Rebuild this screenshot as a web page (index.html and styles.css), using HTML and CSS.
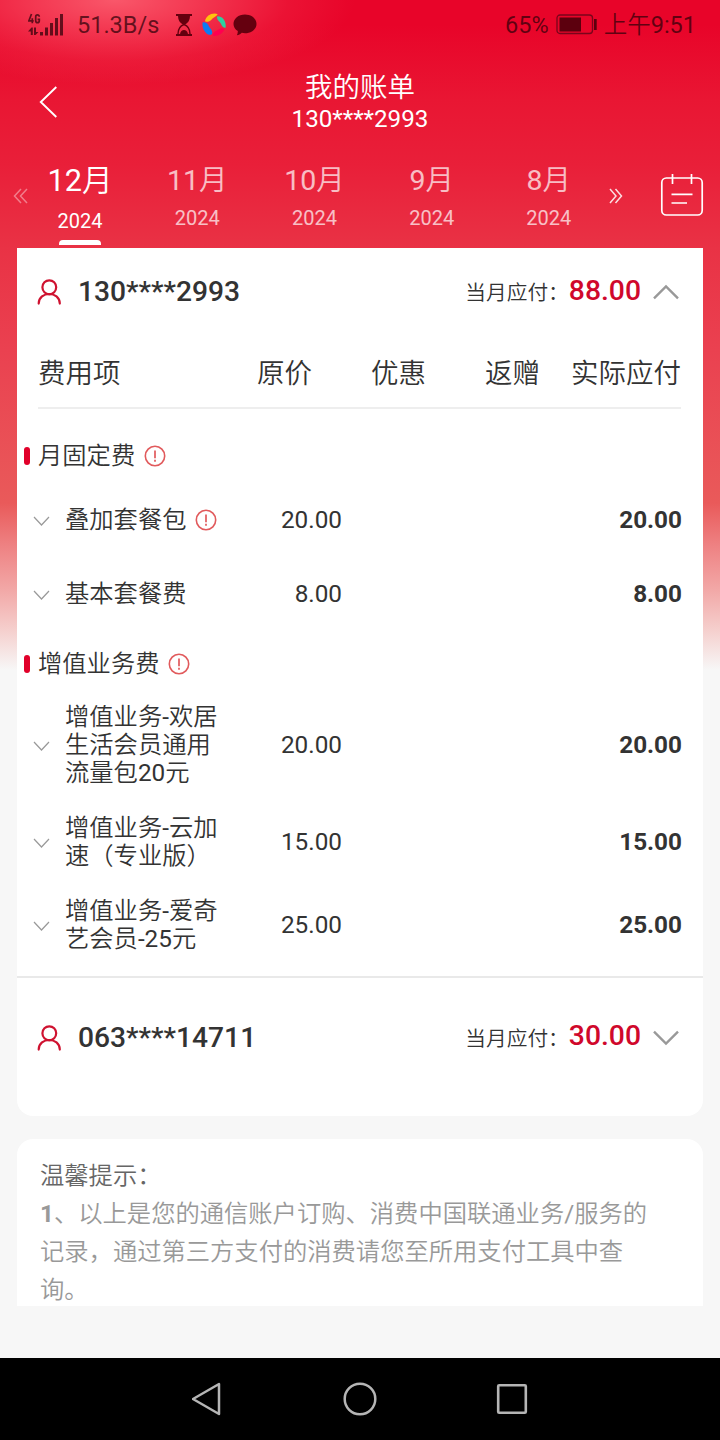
FILE: index.html
```html
<!DOCTYPE html>
<html lang="zh-CN">
<head>
<meta charset="utf-8">
<title>我的账单</title>
<link rel="stylesheet" href="styles.css">
</head>
<body>
<svg class="defs" width="0" height="0" aria-hidden="true">
  <symbol id="user" viewBox="0 0 24 26"><g fill="none" stroke="#cf1230" stroke-width="2.2" stroke-linecap="round"><ellipse cx="12.300" cy="8.300" rx="6.900" ry="7"/><path d="M1.700 24.600C1.700 11.800 22.800 11.800 22.800 24.600"/></g></symbol>
  <symbol id="info" viewBox="0 0 22 22"><g fill="none" stroke="#e15a5c"><circle cx="11" cy="11" r="9.700" stroke-width="1.600"/><path d="M11 5.500v7.700M11 14.800v1.900" stroke-width="1.700"/></g></symbol>
  <symbol id="down" viewBox="0 0 18 12"><path d="M1 2l7.500 8L16 2" fill="none" stroke="#999" stroke-width="1.200"/></symbol>
</svg>
<div class="screen">
  <div class="status">
    <svg class="signal" width="36" height="24" viewBox="0 0 36 24" fill="currentColor"><path d="M12 19h3v3.500h-3zM17 14.500h3v8h-3zM22 10h3v12.500h-3zM27 5h3v17.500h-3zM32 1h3v21.500h-3z"/><path d="M0 18.500L3.500 14.500H4.800V22H2.800v-3.500zM6 14.500h2v4.500h2.500L7.500 22H6z"/><path d="M3.500 1L.9 7.800h4.800M4.300 5.200v5M11.300 3.700C11.300 1.200 7.700 1.200 7.700 3.700v4c0 2.600 3.600 2.600 3.600 0V6.300H9.600" fill="none" stroke="currentColor" stroke-width="1.700"/></svg>
    <span class="speed">51.3B/s</span>
    <svg class="hourglass" width="18" height="24" viewBox="0 0 18 24"><path d="M1 2h16M1 22h16" stroke="currentColor" stroke-width="2"/><path d="M3 2h12c0 5-1.500 8-6 10C4.500 10 3 7 3 2z" fill="currentColor"/><path d="M3 21c0-5 2-8 6-9.500 4 1.500 6 4.500 6 9.500" fill="none" stroke="currentColor" stroke-width="1.400"/><path d="M5 21c.5-2.500 2-4 4-4s3.500 1.500 4 4z" fill="currentColor"/></svg>
    <svg class="swirl" width="24" height="24" viewBox="0 0 24 24"><path d="M3 8.200C4 2.500 10.500-.8 15.700 1.200 14.500 3 12.500 4 10.500 5.500 8.500 8 6.500 9.800 3 8.200z" fill="#ffc20e"/><path d="M15.300 3.200c5.500-.2 9.200 5 8.300 11.500C21 15 20 13 18.800 10.500 17.500 8.500 14 6.500 15.300 3.200z" fill="#2fd0a0"/><path d="M.8 9.300C4.500 9 6 11 7 13.500c1.500 2.500 4 4 3 7.500-1.500 1.500-4 .8-5.500-.5C1 17-.2 13 .8 9.300z" fill="#0c7cf2"/><path d="M22.500 16c-1.500 4.500-6 7.500-12 6.800C11 19.500 12.500 18.500 15 17.500c2.500-1.500 4-3.500 7.500-1.500z" fill="#ff0050"/></svg>
    <svg class="chat" width="24" height="24" viewBox="0 0 24 24"><path d="M12 1.500c6.600 0 11.500 4.200 11.500 9.400S18.600 20.200 12 20.200c-1.200 0-2.200-.1-3.200-.4-1.500 1.500-3.100 2.200-4.900 2.500.6-1.200 1-2.600.9-4.300C2.100 16.300.5 13.800.5 10.900.5 5.700 5.400 1.500 12 1.500z" fill="currentColor"/></svg>
    <span class="percent">65%</span>
    <svg class="battery" width="42" height="22" viewBox="0 0 42 22"><rect x="1" y="1" width="35.500" height="18.500" rx="3" fill="none" stroke="currentColor" stroke-width="1.300"/><path class="charge" d="M3.500 3.500h21.500v14H3.500zM38 5h2.700v11H38z"/></svg>
    <span class="clock">上午9:51</span>
  </div>
  <header class="title">
    <svg class="back" width="20" height="34" viewBox="0 0 20 34"><path d="M18.300 2L2.800 17l15.500 15" fill="none" stroke="#fff" stroke-width="1.900"/></svg>
    <div class="heading"><h1>我的账单</h1><p>130****2993</p></div>
  </header>
  <nav class="months">
    <svg class="prev" width="16" height="16" viewBox="0 0 16 16"><path d="M8 1L1.500 8 8 15M14 1L7.500 8 14 15" fill="none" stroke="#fff" stroke-width="1.500"/></svg>
    <div class="month active"><b>12月</b><span>2024</span></div>
    <div class="month"><b>11月</b><span>2024</span></div>
    <div class="month"><b>10月</b><span>2024</span></div>
    <div class="month"><b>9月</b><span>2024</span></div>
    <div class="month"><b>8月</b><span>2024</span></div>
    <svg class="next" width="16" height="16" viewBox="0 0 16 16"><path d="M1 1l6 7-6 7M6.500 1l6 7-6 7" fill="none" stroke="#fff" stroke-width="1.500"/></svg>
    <svg class="calendar" width="44" height="44" viewBox="0 0 44 44"><g fill="none" stroke="#fff" stroke-width="1.700"><rect x="1.800" y="4" width="40.400" height="37" rx="4.500"/><path d="M12.500 0v10M31.500 0v10M11.500 20.300h21M11.500 29h15.500"/></g></svg>
  </nav>
  <main class="bill">
    <div class="account">
      <svg class="user" width="24" height="26"><use href="#user"/></svg>
      <strong>130****2993</strong><span class="due">当月应付：</span><em>88.00</em>
      <svg class="toggle" width="26" height="16" viewBox="0 0 26 16"><path d="M1 14.300L13 2.500l12 11.800" fill="none" stroke="#999" stroke-width="2.400"/></svg>
    </div>
    <div class="columns"><span>费用项</span><span>原价</span><span>优惠</span><span>返赠</span><span>实际应付</span></div>
    <div class="items">
      <h2 class="group first">月固定费<svg width="22" height="22"><use href="#info"/></svg></h2>
      <div class="item"><svg class="arrow" width="18" height="12"><use href="#down"/></svg><span class="name">叠加套餐包<svg width="22" height="22"><use href="#info"/></svg></span><span class="price">20.00</span><b>20.00</b></div>
      <div class="item"><svg class="arrow" width="18" height="12"><use href="#down"/></svg><span class="name">基本套餐费</span><span class="price">8.00</span><b>8.00</b></div>
      <h2 class="group">增值业务费<svg width="22" height="22"><use href="#info"/></svg></h2>
      <div class="item multi"><svg class="arrow" width="18" height="12"><use href="#down"/></svg><span class="name">增值业务-欢居<br>生活会员通用<br>流量包20元</span><span class="price">20.00</span><b>20.00</b></div>
      <div class="item multi"><svg class="arrow" width="18" height="12"><use href="#down"/></svg><span class="name">增值业务-云加<br>速（专业版）</span><span class="price">15.00</span><b>15.00</b></div>
      <div class="item multi"><svg class="arrow" width="18" height="12"><use href="#down"/></svg><span class="name">增值业务-爱奇<br>艺会员-25元</span><span class="price">25.00</span><b>25.00</b></div>
    </div>
    <div class="account second">
      <svg class="user" width="24" height="26"><use href="#user"/></svg>
      <strong>063****14711</strong><span class="due">当月应付：</span><em>30.00</em>
      <svg class="toggle" width="26" height="16" viewBox="0 0 26 16"><path d="M1 1.700l12 11.800L25 1.700" fill="none" stroke="#999" stroke-width="2.400"/></svg>
    </div>
  </main>
  <section class="tips">
    <h3>温馨提示：</h3>
    <p><b>1</b>、以上是您的通信账户订购、消费中国联通业务/服务的<br>记录，通过第三方支付的消费请您至所用支付工具中查<br>询。</p>
  </section>
  <footer class="keys">
    <svg width="32" height="36" viewBox="0 0 32 36"><path d="M1 18L27 3v30z" fill="none" stroke="#b5b5b5" stroke-width="2.500" stroke-linejoin="round"/></svg>
    <svg width="36" height="36" viewBox="0 0 36 36"><circle cx="18" cy="18" r="15.300" fill="none" stroke="#b5b5b5" stroke-width="2.500"/></svg>
    <svg width="32" height="32" viewBox="0 0 32 32"><rect x="2.200" y="2.200" width="27.600" height="27.600" rx="1" fill="none" stroke="#b5b5b5" stroke-width="2.600"/></svg>
  </footer>
</div>
</body>
</html>
```

FILE: styles.css
```css
* { box-sizing: border-box; margin: 0; padding: 0; }
body { font-family: Roboto, "Noto Sans CJK SC DemiLight", "Noto Sans CJK SC", sans-serif; font-weight: 400; color: #333; background: #f7f7f7; }
svg { display: block; flex: none; }
.defs { position: absolute; }
.screen {
  width: 720px; height: 1440px; overflow: hidden; display: flex; flex-direction: column;
  background:
    radial-gradient(ellipse 240px 85px at 115px 0, rgba(255,115,128,.75), rgba(255,105,120,.5) 35%, rgba(255,100,115,.15) 72%, rgba(255,100,115,0)),
    linear-gradient(#e80429 0, #e80429 25px, #e91633 100px, #e91f39 165px, #e93245 248px, #ea4150 350px, #e95a5a 503px, #ee8182 545px, #f2a8a7 590px, #f5cfcd 630px, #f7f7f7 670px);
}
.status { height: 50px; display: flex; align-items: center; padding: 0 24px 0 28px; font-size: 23.5px; line-height: 30px; color: rgba(45,0,8,.72); white-space: nowrap; }
.speed { margin-left: 13px; width: 98px; }
.swirl { margin-left: 9px; }
.hourglass, .chat { color: #65000f; }
.chat { margin-left: 7px; }
.percent { margin-left: auto; }
.battery { margin-left: 7px; color: #79051b; }
.charge { fill: #5c000e; }
.clock { margin-left: 6px; }
.title { height: 102px; display: flex; justify-content: center; position: relative; color: #fff; text-align: center; }
.back { position: absolute; left: 38px; top: 35px; }
.heading { padding-top: 21px; }
.heading h1 { font-size: 27.5px; font-weight: 400; line-height: 34px; }
.heading p { font-size: 24.2px; line-height: 28px; }
.months { height: 96px; display: flex; align-items: center; color: #fff; padding: 0 16px 8px 13px; }
.month { width: 117.2px; height: 96px; margin-top: 8px; text-align: center; opacity: .7; }
.month b, .month span { display: block; font-weight: 400; }
.month b { font-size: 28.5px; line-height: 36px; padding-top: 11px; }
.month span { font-size: 20px; line-height: 26px; margin-top: 6px; }
.month.active { opacity: 1; }
.active b { font-size: 30.7px; }
.month.active span { margin-top: 9px; }
.active::after { content: ""; display: block; width: 42px; height: 5px; margin: 6px auto 0; background: #fff; border-radius: 4px 4px 0 0; }
.prev { opacity: .4; margin-right: -7.5px; }
.next { margin-left: 2px; opacity: .85; }
.calendar { margin-left: auto; }
.bill { width: 686px; height: 868px; margin-left: 17px; background: #fff; border-radius: 0 0 16px 16px; }
.account { height: 87px; display: flex; align-items: center; padding: 0 24px 0 20px; }
.account strong { margin-left: 17px; font-size: 28.2px; font-weight: 500; line-height: 34px; }
.due { margin-left: auto; font-size: 20.7px; line-height: 30px; padding-top: 2px; }
.account em { font-style: normal; font-weight: 500; font-size: 28.3px; line-height: 34px; color: #d0082b; margin-bottom: 2px; }
.toggle { margin-left: 12px; }
.columns { height: 74px; margin: 0 22px 0 21px; padding-top: 5px; border-bottom: 2px solid #eee; display: grid; grid-template-columns: 159px 115px 114px 114px 141px; align-items: center; font-size: 27.5px; text-align: right; line-height: 36px; }
.columns span:first-child { text-align: left; }
.items { height: 569px; border-bottom: 2px solid #e9e9e9; font-size: 24.3px; line-height: 28px; }
.group { display: flex; align-items: center; height: 59px; padding: 7px 0 0 7px; font-size: 24.3px; font-weight: 400; }
.group.first { height: 74px; padding-top: 20px; }
.group::before { content: ""; width: 6px; height: 18px; border-radius: 3px; background: #e1002a; margin-right: 8px; }
.group svg { margin-left: 9px; }
.arrow { margin-top: 2px; }
.item { display: grid; grid-template-columns: 32px 176px 101px 1fr; align-items: center; min-height: 74px; padding: 0 21px 0 16px; }
.item.multi { min-height: 0; padding-top: 13px; padding-bottom: 14px; }
.name { display: flex; align-items: center; white-space: nowrap; }
.multi .name { display: block; }
.name svg { margin-left: 9px; }
.price, .item b { text-align: right; }
.second { height: 119px; }
.second em { margin-bottom: 4px; }
.tips { width: 686px; height: 167px; margin: 23px 0 0 17px; padding: 18px 23px 0; background: #fff; border-radius: 16px 16px 0 0; overflow: hidden; font-size: 24.3px; line-height: 38px; color: #999; white-space: nowrap; }
.tips h3 { font-size: 24.3px; font-weight: 400; color: #666; }
.keys { margin-top: auto; height: 82px; background: #000; display: flex; align-items: center; justify-content: center; gap: 118px; }
```
